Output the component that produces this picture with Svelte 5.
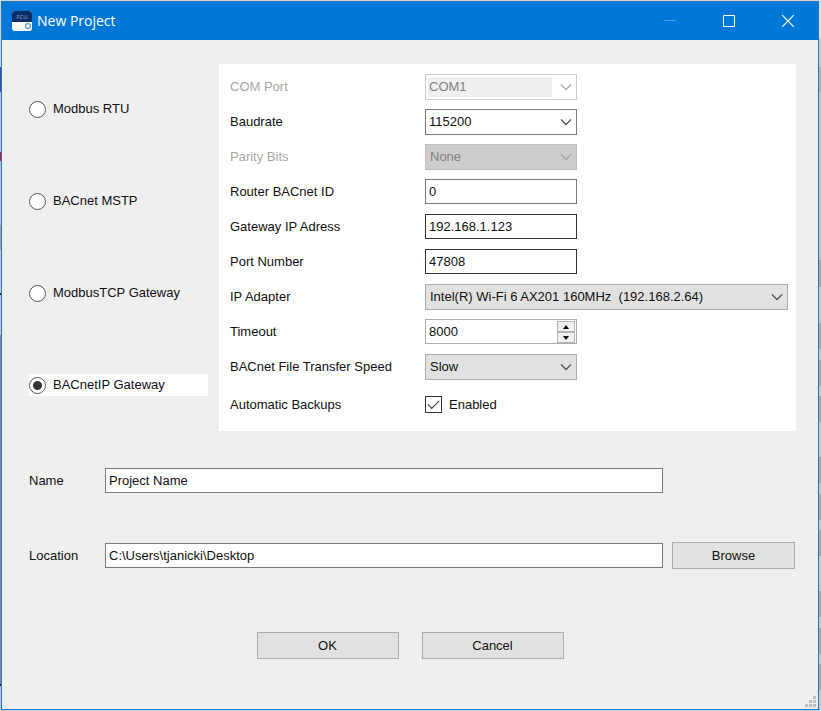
<script>
  let protocol = $state('bacnetip');
  let backups = $state(true);

  const protocols = [
    { id: 'rtu', label: 'Modbus RTU' },
    { id: 'mstp', label: 'BACnet MSTP' },
    { id: 'tcp', label: 'ModbusTCP Gateway' },
    { id: 'bacnetip', label: 'BACnetIP Gateway' }
  ];

  const fields = [
    { id: 'com', label: 'COM Port', kind: 'combo', value: 'COM1', disabled: true },
    { id: 'baud', label: 'Baudrate', kind: 'combo', value: '115200' },
    { id: 'parity', label: 'Parity Bits', kind: 'list', value: 'None', disabled: true },
    { id: 'router', label: 'Router BACnet ID', kind: 'text', value: '0' },
    { id: 'gateway', label: 'Gateway IP Adress', kind: 'text', value: '192.168.1.123', dark: true },
    { id: 'port', label: 'Port Number', kind: 'text', value: '47808', dark: true },
    { id: 'adapter', label: 'IP Adapter', kind: 'list', value: 'Intel(R) Wi-Fi 6 AX201 160MHz\u00a0 (192.168.2.64)', wide: true },
    { id: 'timeout', label: 'Timeout', kind: 'spin', value: '8000' },
    { id: 'speed', label: 'BACnet File Transfer Speed', kind: 'list', value: 'Slow' }
  ];
</script>

<div class="desktop">
  <main class="window">
    <header>
      <svg class="logo" width="20" height="20" viewBox="0 0 20 20" aria-hidden="true">
        <rect width="20" height="20" rx="3" fill="#fff" />
        <path d="M0 11V3a3 3 0 0 1 3-3h14a3 3 0 0 1 3 3v8z" fill="#0b2f66" />
        <text x="10" y="8" text-anchor="middle" font-size="6" fill="#8fa8cc">FCU</text>
        <circle cx="16" cy="15" r="2.5" fill="#e8f3fd" stroke="#72a9dc" stroke-width="1.4" />
      </svg>
      <h1>New Project</h1>
      <button class="caption" aria-label="Minimize" disabled>
        <svg width="12" height="12" viewBox="0 0 12 12"><path d="M0 5.5h12" stroke="#4da0e4" /></svg>
      </button>
      <button class="caption" aria-label="Maximize">
        <svg width="12" height="12" viewBox="0 0 12 12"><path d="M.5.5h11v11H.5z" fill="none" stroke="#fff" /></svg>
      </button>
      <button class="caption" aria-label="Close">
        <svg width="12" height="12" viewBox="0 0 12 12"><path d="M0 0l12 12M12 0L0 12" stroke="#fff" stroke-width="1.2" /></svg>
      </button>
    </header>

    <div class="body">
      <div class="settings">
        <div class="protocols" role="radiogroup" aria-label="Protocol">
          {#each protocols as p}
            <label class:selected={protocol === p.id}>
              <input type="radio" name="protocol" value={p.id} bind:group={protocol} />
              {p.label}
            </label>
          {/each}
        </div>

        <div class="panel">
          {#each fields as f}
            <div class="row" class:disabled={f.disabled}>
              <label for={f.id}>{f.label}</label>
              <div class="control {f.kind}" class:wide={f.wide} class:dark={f.dark}>
                {#if f.kind === 'combo' || f.kind === 'list'}
                  <select id={f.id} disabled={f.disabled}><option>{f.value}</option></select>
                  <svg class="chevron" width="12" height="8" viewBox="0 0 12 8" aria-hidden="true">
                    <path d="M1 1.5l5 5 5-5" fill="none" stroke="currentColor" stroke-width="1.3" />
                  </svg>
                {:else}
                  <input id={f.id} type="text" value={f.value} />
                  {#if f.kind === 'spin'}
                    <div class="steps">
                      <button aria-label="Increase"><svg width="6" height="4" viewBox="0 0 6 4"><path d="M3 0l3 4H0z" /></svg></button>
                      <button aria-label="Decrease"><svg width="6" height="4" viewBox="0 0 6 4"><path d="M3 4l3-4H0z" /></svg></button>
                    </div>
                  {/if}
                {/if}
              </div>
            </div>
          {/each}
          <div class="row last">
            <span class="title">Automatic Backups</span>
            <label class="check">
              <input type="checkbox" bind:checked={backups} />
              Enabled
            </label>
          </div>
        </div>
      </div>

      <div class="entry name">
        <label for="name">Name</label>
        <input id="name" type="text" value="Project Name" />
      </div>
      <div class="entry location">
        <label for="location">Location</label>
        <input id="location" type="text" value="C:\Users\tjanicki\Desktop" />
        <button class="push">Browse</button>
      </div>

      <div class="actions">
        <button class="push">OK</button>
        <button class="push">Cancel</button>
      </div>
    </div>

    <svg class="grip" width="11" height="11" viewBox="0 0 11 11" aria-hidden="true">
      <path d="M8 0h3v3H8zM4 4h3v3H4zM8 4h3v3H8zM0 8h3v3H0zM4 8h3v3H4zM8 8h3v3H8z" fill="#c0c0c0" />
    </svg>
  </main>
</div>

<style>
  :global(body) { margin: 0; }
  .desktop {
    box-sizing: border-box;
    min-height: 100vh;
    display: flex;
    padding: 1px 2px 1px 1px;
    background:
      linear-gradient(#d4d4d4 67px, #484f90 67px 92px, #c4c4c4 92px 152px, #e01020 152px 161px, #c4c4c4 161px 225px,
        #a4a4a4 225px 250px, #c8c8c8 250px 293px, #222 293px 295px, #c8c8c8 295px 335px, #888 335px 684px,
        #222 684px 686px, #c4c4c4 686px) left / 1px 100% no-repeat,
      linear-gradient(#dcdcdc 38px, #c8c8c8 38px 67px, #b4b4b4 67px 92px, #c4c4c4 92px 260px, #a8a8a8 260px 287px,
        transparent 287px) right / 2px 100% no-repeat,
      repeating-linear-gradient(#c8c8c8 0 35px, #a8a8a8 35px 61px, #c8c8c8 61px 72px, #a8a8a8 72px 98px,
        #c8c8c8 98px 108px, #a8a8a8 108px 134px) right 288px / 2px 100% no-repeat,
      #d0d0d0;
    font: 13px/20px "Liberation Sans", Arial, sans-serif;
    color: #111;
  }
  .window {
    box-sizing: border-box;
    position: relative;
    flex: 1;
    border: 1px solid #1979ca;
    background: #efefef;
  }
  header {
    display: flex;
    align-items: center;
    height: 38px;
    padding: 0 1px 0 10px;
    background: #0078d7;
    color: #fff;
  }
  .logo { font-family: "Open Sans", sans-serif; }
  h1 {
    flex: 1;
    margin: 0 0 0 5px;
    font: 400 14px/20px "Open Sans", "Noto Sans", sans-serif;
  }
  .caption {
    display: flex;
    align-items: center;
    justify-content: center;
    width: 59px;
    height: 38px;
    padding: 0;
    border: 0;
    background: none;
  }
  .body { padding: 24px 22px 24px 27px; }
  .settings { display: flex; justify-content: space-between; gap: 11px; }
  .protocols {
    flex: 1;
    display: flex;
    flex-direction: column;
    gap: 70px;
    padding-top: 34px;
  }
  .protocols label {
    display: flex;
    align-items: center;
    gap: 7px;
    height: 22px;
  }
  .protocols label.selected { background: #fff; }
  input[type='radio'] {
    appearance: none;
    flex: none;
    box-sizing: border-box;
    width: 17px;
    height: 17px;
    margin: 0;
    border: 1px solid #555;
    border-radius: 50%;
    background: #fff;
  }
  input[type='radio']:checked { background: radial-gradient(circle, #333 4px, #fff 5px); }
  .panel {
    box-sizing: border-box;
    flex: 0 1 577px;
    padding: 5px 8px 6px 11px;
    background: #fff;
  }
  .row { display: flex; align-items: center; height: 35px; }
  .row > label:first-child, .title { flex: 0 0 195px; }
  .row.disabled > label { color: #a8a8a8; }
  .row.last { height: 41px; }
  .control { position: relative; display: flex; box-sizing: border-box; width: 152px; }
  .control.wide { flex: 1; }
  select, input[type='text'] {
    appearance: none;
    box-sizing: border-box;
    width: 100%;
    height: 26px;
    padding: 0 3px;
    border: 1px solid #7a7a7a;
    border-radius: 0;
    background: #fff;
    color: #111;
    font: inherit;
  }
  input[type='text'] { height: 25px; }
  .list select { padding-left: 4px; border-color: #adadad; background: #e1e1e1; }
  .dark input[type='text'] { border-color: #333; }
  .combo select:disabled {
    border-color: #ccc;
    background: #efefef;
    box-shadow: inset 0 0 0 2px #fff, inset -24px 0 #fff;
    color: #838383;
    opacity: 1;
  }
  .list select:disabled { border-color: #bfbfbf; background: #ccc; color: #838383; opacity: 1; }
  .chevron { position: absolute; right: 5px; top: 9px; color: #555; pointer-events: none; }
  .disabled .chevron { color: #aaa; }
  .spin input[type='text'] { border-color: #abadb3; }
  .steps {
    position: absolute;
    right: 2px;
    top: 2px;
    display: flex;
    flex-direction: column;
    width: 18px;
  }
  .steps button {
    display: flex;
    align-items: center;
    justify-content: center;
    box-sizing: border-box;
    height: 11px;
    padding: 0;
    border: 1px solid #b4b4b4;
    background: #f0f0f0;
  }
  .check { display: flex; align-items: center; gap: 7px; }
  input[type='checkbox'] {
    appearance: none;
    box-sizing: border-box;
    width: 17px;
    height: 17px;
    margin: 0;
    border: 1px solid #333;
    background: #fff;
    display: grid;
    place-items: center;
  }
  input[type='checkbox']:checked::after {
    content: '';
    width: 10px;
    height: 5px;
    margin-bottom: 4px;
    border: solid #333;
    border-width: 0 0 1px 1px;
    transform: rotate(-45deg);
  }
  .entry { display: flex; align-items: center; gap: 9px; height: 27px; }
  .entry label { flex: 0 0 67px; }
  .entry input[type='text'] { flex: 0 1 558px; width: 0; }
  .name { margin-top: 36px; }
  .location { margin-top: 48px; }
  .push {
    box-sizing: border-box;
    height: 27px;
    padding: 0;
    border: 1px solid #adadad;
    background: #e1e1e1;
    color: #111;
    font: inherit;
  }
  .location .push { flex: 0 0 123px; }
  .actions { display: flex; justify-content: center; gap: 23px; margin-top: 63px; padding-right: 5px; }
  .actions .push { flex: 0 0 142px; }
  .grip { position: absolute; right: 2px; bottom: 2px; }
</style>
